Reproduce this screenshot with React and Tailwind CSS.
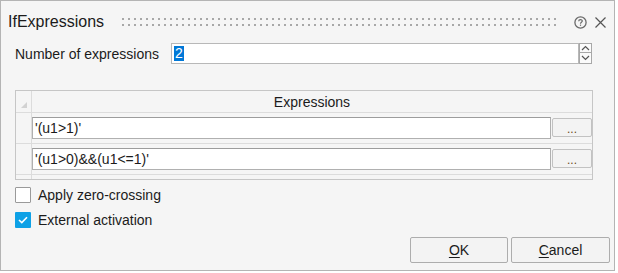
import React from "react";

function Dots() {
  return (
    <svg width="100%" height="8" className="block">
      <defs>
        <pattern id="grip" x="0" y="0" width="6" height="6" patternUnits="userSpaceOnUse">
          <rect x="0" y="0" width="2" height="2" fill="#a8a8a8" />
        </pattern>
      </defs>
      <rect x="0" y="0" width="100%" height="8" fill="url(#grip)" />
    </svg>
  );
}

function HelpIcon() {
  return (
    <svg width="13" height="13" viewBox="0 0 13 13" className="block">
      <circle cx="6.5" cy="6.5" r="5.6" fill="none" stroke="#6a6a6a" strokeWidth="1.3" />
      <path d="M4.7 5.2 C4.7 3.2 8.3 3.2 8.3 5.1 C8.3 6.3 6.5 6.4 6.5 7.7" fill="none" stroke="#6a6a6a" strokeWidth="1.2" />
      <rect x="5.9" y="8.6" width="1.2" height="1.2" fill="#6a6a6a" />
    </svg>
  );
}

function CloseIcon() {
  return (
    <svg width="11" height="11" viewBox="0 0 11 11" className="block">
      <path d="M0.5 0.5 L10.5 10.5 M10.5 0.5 L0.5 10.5" stroke="#555" strokeWidth="1.2" />
    </svg>
  );
}

function Chevron({ up }) {
  return (
    <svg width="9" height="6" viewBox="0 0 9 6" className="block">
      <path d={up ? "M1 5 L4.5 1.5 L8 5" : "M1 1 L4.5 4.5 L8 1"} fill="none" stroke="#555" strokeWidth="1.2" />
    </svg>
  );
}

function Row({ value }) {
  return (
    <div className="flex h-[31px] border-b border-[#dcdcdc]">
      <div className="w-[16px] border-r border-[#dcdcdc]" />
      <div className="flex pt-[4px]">
        <div className="w-[519px] h-[22px] bg-white border border-[#b0b0b0] border-t-[#9c9c9c] flex items-center pl-[2px] text-[14px] leading-none">
          {value}
        </div>
        <div className="ml-[1px] mt-[1px] w-[40px] h-[19px] border border-[#c2c2c2] rounded-[2px] bg-[#f3f3f3] flex items-center justify-center text-[12px] leading-none text-[#6b4a1a] pt-[2px]">
          ...
        </div>
      </div>
    </div>
  );
}

export default function App() {
  return (
    <div className="w-[618px] h-[273px] bg-white">
      <div className="w-[615px] h-[271px] border border-[#b4b4b4] bg-[#f5f5f5] flex flex-col font-['Liberation_Sans',Arial,sans-serif] text-[#1b1b1b]">
        <div className="h-[42px] flex items-center pl-[7px]">
          <span className="text-[16px] leading-[20px]">IfExpressions</span>
          <div className="flex-1 ml-[18px] mr-[15px] h-[8px]">
            <Dots />
          </div>
          <HelpIcon />
          <div className="ml-[8px] mr-[8px]">
            <CloseIcon />
          </div>
        </div>

        <div className="flex items-center h-[21px] pl-[14px]">
          <span className="w-[156px] text-[14px] leading-none">Number of expressions</span>
          <div className="w-[408px] h-[21px] bg-white border border-[#b8b8b8] flex items-center pl-[2px]">
            <span className="bg-[#0078d7] text-white text-[14px] leading-[15px] px-[1px]">2</span>
          </div>
          <div className="w-[13px] h-[21px] flex flex-col">
            <div className="h-[10px] border border-[#a8a8a8] bg-[#fbfbfb] flex items-center justify-center">
              <Chevron up />
            </div>
            <div className="h-[11px] border border-t-0 border-[#a8a8a8] bg-[#fbfbfb] flex items-center justify-center">
              <Chevron />
            </div>
          </div>
        </div>

        <div className="mt-[26px] ml-[14px] w-[578px] h-[90px] border border-[#c6c6c6] flex flex-col">
          <div className="flex h-[22px] border-b border-[#dcdcdc]">
            <div className="w-[16px] border-r border-[#dcdcdc] flex items-end justify-end pr-[4px] pb-[4px]">
              <svg width="6" height="6" viewBox="0 0 6 6" className="block">
                <path d="M6 0 L6 6 L0 6 Z" fill="#d2d2d2" />
              </svg>
            </div>
            <div className="flex-1 flex items-center justify-center text-[14px] leading-none">Expressions</div>
          </div>
          <Row value="'(u1>1)'" />
          <Row value="'(u1>0)&&(u1<=1)'" />
          <div className="flex-1 flex">
            <div className="w-[16px] border-r border-[#dcdcdc]" />
          </div>
        </div>

        <div className="mt-[7px] pl-[14px] flex flex-col gap-[9px]">
          <div className="flex items-center h-[16px]">
            <div className="w-[16px] h-[16px] bg-white border border-[#9a9a9a] rounded-[1px]" />
            <span className="ml-[7px] text-[14px] leading-none">Apply zero-crossing</span>
          </div>
          <div className="flex items-center h-[16px]">
            <div className="w-[16px] h-[16px] bg-[#0ea1e6] rounded-[1px] flex items-center justify-center">
              <svg width="10" height="8" viewBox="0 0 10 8" className="block">
                <path d="M1 4 L3.8 6.6 L9 1.2" fill="none" stroke="white" strokeWidth="1.6" />
              </svg>
            </div>
            <span className="ml-[7px] text-[14px] leading-none">External activation</span>
          </div>
        </div>

        <div className="mt-[9px] flex justify-end pr-[4px] gap-[3px]">
          <button className="w-[98px] h-[26px] border border-[#adadad] rounded-[2px] bg-[#f3f3f3] text-[14px] leading-none text-[#1b1b1b]">
            <span className="underline underline-offset-2">O</span>K
          </button>
          <button className="w-[99px] h-[26px] border border-[#adadad] rounded-[2px] bg-[#f3f3f3] text-[14px] leading-none text-[#1b1b1b]">
            <span className="underline underline-offset-2">C</span>ancel
          </button>
        </div>
      </div>
    </div>
  );
}
